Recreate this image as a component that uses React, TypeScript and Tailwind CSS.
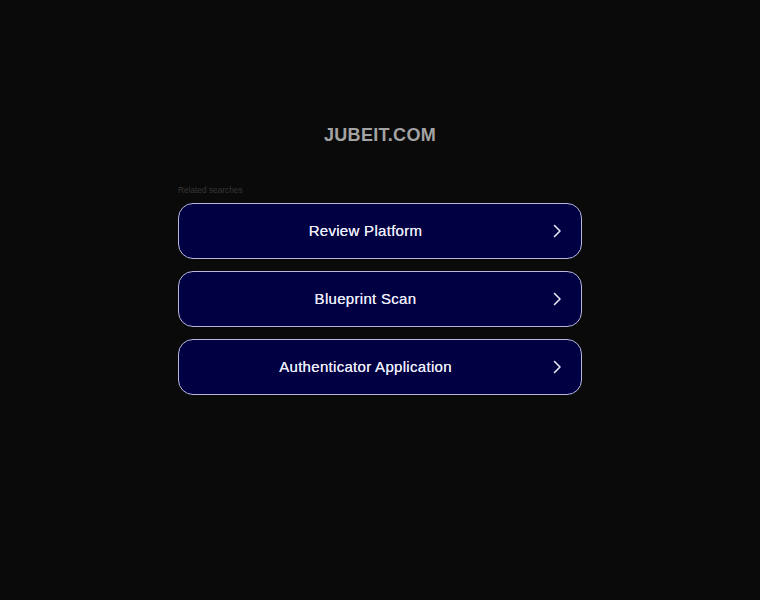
import React from "react";

const searches = ["Review Platform", "Blueprint Scan", "Authenticator Application"];

export default function App() {
  return (
    <div
      className="min-h-[600px] w-full bg-[#0a0a0a] flex flex-col items-center"
      style={{ fontFamily: '"Liberation Sans", Arial, sans-serif' }}
    >
      <h1 className="mt-[124px] text-[18px] leading-[22px] font-bold tracking-[0.3px] text-[#a3a3a3]">
        JUBEIT.COM
      </h1>
      <div className="mt-[38px] w-[404px]">
        <p className="text-[8.3px] leading-[12px] text-[#363636]">Related searches</p>
        <div className="mt-[7px] flex flex-col gap-3">
          {searches.map((s) => (
            <a
              key={s}
              href="#"
              className="h-[56px] flex items-center gap-5 pl-5 pr-[19px] rounded-[15px] border border-[#b9b6dc] bg-[#000042]"
            >
              <span className="flex-1 text-center text-[15px] font-medium tracking-[0.3px] text-[#ececf8] [text-shadow:0_0_0.4px_#ececf8]">
                {s}
              </span>
              <svg width="10" height="14" viewBox="0 0 10 14" fill="none">
                <path d="M2.5 1.5 L8 7 L2.5 12.5" stroke="#e6e6f5" strokeWidth="1.6" strokeLinecap="round" strokeLinejoin="round" />
              </svg>
            </a>
          ))}
        </div>
      </div>
    </div>
  );
}
